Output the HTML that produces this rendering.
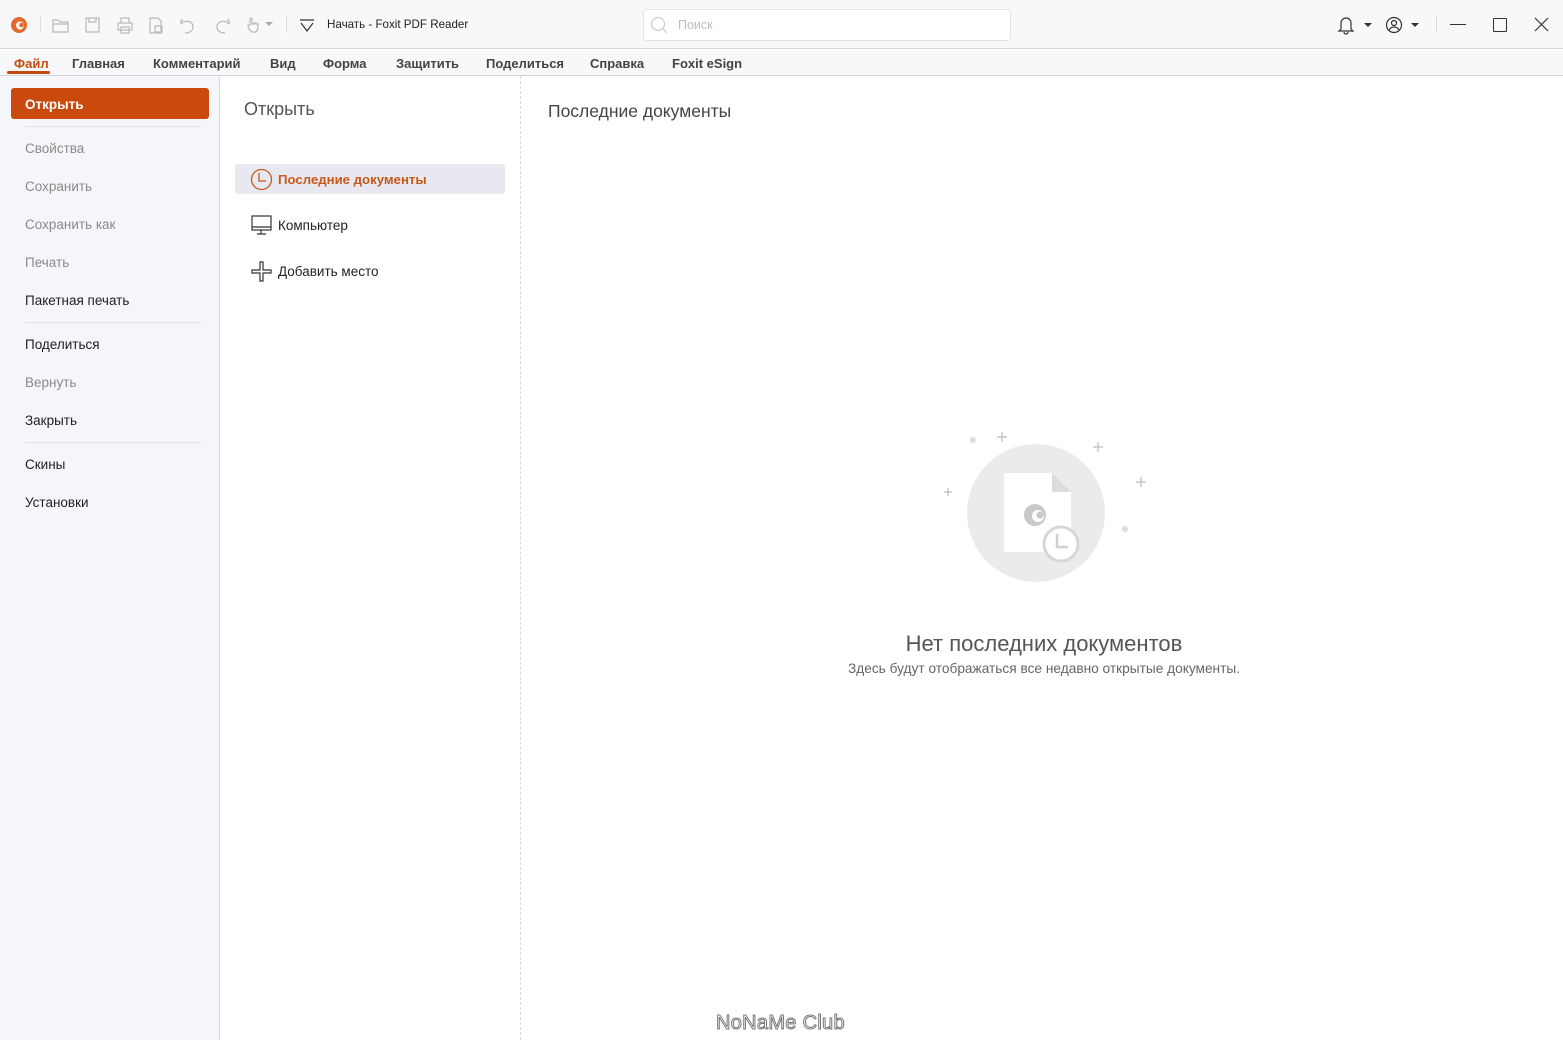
<!DOCTYPE html>
<html><head><meta charset="utf-8">
<style>
*{margin:0;padding:0;box-sizing:border-box}
body{width:1563px;height:1040px;overflow:hidden;background:#fff;font-family:"Liberation Sans","DejaVu Sans",sans-serif;color:#222;position:relative}
.abs{position:absolute}
#top{left:0;top:0;width:1563px;height:49px;background:#f8f8fb;border-bottom:1px solid #d4d4d8}
#tabs{left:0;top:50px;width:1563px;height:26px;background:#f8f8fb;border-bottom:1px solid #d4d4d8}
.tab{position:absolute;top:6px;font-size:13px;font-weight:bold;color:#444}
#side{left:0;top:76px;width:220px;height:964px;background:#f5f6fa;border-right:1px solid #dcdce0}
.mi{position:absolute;left:25px;font-size:13.5px;color:#222}
.dis{color:#8a8a8a}
.hr{position:absolute;left:25px;width:176px;height:1px;background:#e2e3e8}
#dash{left:520px;top:76px;width:0;height:964px;border-left:1px dashed #d8d8d8}
</style></head><body>
<div id="top" class="abs">
  <svg class="abs" style="left:10px;top:16px" width="18" height="18" viewBox="0 0 18 18"><circle cx="9" cy="9" r="8" fill="#e6692b"/><circle cx="10" cy="9.5" r="4" fill="#f8f8fb"/><circle cx="11.5" cy="9" r="2.3" fill="#e6692b"/></svg>
  <div class="abs" style="left:40px;top:16px;width:1px;height:17px;background:#ddd"></div>
  <svg class="abs" style="left:52px;top:16px" width="220" height="18" viewBox="0 0 220 18" fill="none" stroke="#b8b8b8" stroke-width="1.2">
    <path d="M1 4h5l2 2h8v10H1z M1 8h15"/>
    <rect x="34" y="2" width="13" height="14"/><path d="M37 2v4h7V2"/>
    <rect x="66" y="7" width="14" height="7"/><path d="M69 7V2h8v5 M69 11h8v6h-8z"/>
    <path d="M98 2h8l3 3v12H98z M103 10h7v6h-7z"/>
    <path d="M131 4h-2v4 M129 8 c3-4 12-4 12 3 c0 4-4 6-8 6"/>
    <path d="M175 4h2v4 M177 8 c-3-4-12-4-12 3 c0 4 4 6 8 6"/>
    <path d="M200 16c-3-2-4-5-4-7 l2 0 V3a1 1 0 0 1 2 0v5h2v-1h2v1h2v2c0 4-1 5-2 6z"/>
  </svg>
  <svg class="abs" style="left:265px;top:22px" width="8" height="5"><path d="M0 0h8l-4 4z" fill="#aaa"/></svg>
  <div class="abs" style="left:286px;top:16px;width:1px;height:17px;background:#ddd"></div>
  <svg class="abs" style="left:299px;top:17px" width="16" height="16" fill="none" stroke="#333" stroke-width="1.2"><path d="M1 3h14 M2 6l6 8 6-8"/></svg>
  <div class="abs" style="left:327px;top:18px;font-size:11.6px;color:#222">Начать - Foxit PDF Reader</div>
  <div class="abs" style="left:643px;top:9px;width:368px;height:32px;background:#fff;border:1px solid #e4e4e8;border-radius:3px"></div>
  <svg class="abs" style="left:650px;top:16px" width="18" height="18" fill="none" stroke="#ccc" stroke-width="1.2"><circle cx="8" cy="8" r="6.5"/><path d="M13 13l4 4"/></svg>
  <div class="abs" style="left:678px;top:18px;font-size:12.5px;color:#bbb">Поиск</div>
  <svg class="abs" style="left:1337px;top:15px" width="90" height="20" fill="none" stroke="#333" stroke-width="1.2">
    <path d="M4 14V8a5 5 0 0 1 10 0v6l2 2H2z M7 17a2 2 0 0 0 4 0"/>
    <path d="M27 8h8l-4 4z" fill="#333" stroke="none"/>
    <circle cx="57" cy="10" r="7.5"/><circle cx="57" cy="8" r="2.5"/><path d="M52 15c2-4 8-4 10 0"/>
    <path d="M74 8h8l-4 4z" fill="#333" stroke="none"/>
  </svg>
  <div class="abs" style="left:1436px;top:16px;width:1px;height:16px;background:#ddd"></div>
  <div class="abs" style="left:1450px;top:24px;width:16px;height:1px;background:#333"></div>
  <div class="abs" style="left:1493px;top:18px;width:14px;height:14px;border:1.3px solid #333;border-radius:1px"></div>
  <svg class="abs" style="left:1534px;top:17px" width="15" height="15" stroke="#333" stroke-width="1.2"><path d="M1 1l13 13 M14 1L1 14"/></svg>
</div>
<div id="tabs" class="abs">
  <div class="tab" style="left:14px;color:#c64a10">Файл</div>
  <div class="abs" style="left:7px;top:21px;width:43px;height:3px;background:#c64a10;border-radius:2px"></div>
  <div class="tab" style="left:72px">Главная</div>
  <div class="tab" style="left:153px">Комментарий</div>
  <div class="tab" style="left:270px">Вид</div>
  <div class="tab" style="left:323px">Форма</div>
  <div class="tab" style="left:396px">Защитить</div>
  <div class="tab" style="left:486px">Поделиться</div>
  <div class="tab" style="left:590px">Справка</div>
  <div class="tab" style="left:672px">Foxit eSign</div>
</div>
<div id="side" class="abs">
  <div class="abs" style="left:11px;top:12px;width:198px;height:31px;background:#c94a0c;border-radius:3px"></div>
  <div class="abs" style="left:25px;top:21px;font-size:13.5px;font-weight:bold;color:#fff">Открыть</div>
  <div class="hr" style="top:50px"></div>
  <div class="mi dis" style="top:65px">Свойства</div>
  <div class="mi dis" style="top:103px">Сохранить</div>
  <div class="mi dis" style="top:141px">Сохранить как</div>
  <div class="mi dis" style="top:179px">Печать</div>
  <div class="mi" style="top:217px">Пакетная печать</div>
  <div class="hr" style="top:246px"></div>
  <div class="mi" style="top:261px">Поделиться</div>
  <div class="mi dis" style="top:299px">Вернуть</div>
  <div class="mi" style="top:337px">Закрыть</div>
  <div class="hr" style="top:366px"></div>
  <div class="mi" style="top:381px">Скины</div>
  <div class="mi" style="top:419px">Установки</div>
</div>
<div class="abs" style="left:244px;top:99px;font-size:18px;color:#555">Открыть</div>
<div class="abs" style="left:235px;top:164px;width:270px;height:30px;background:#e8e9f0;border-radius:3px"></div>
<svg class="abs" style="left:250px;top:168px" width="24" height="24" fill="none" stroke="#c9581c" stroke-width="1.3"><circle cx="11.5" cy="11.5" r="10"/><path d="M9 5v8h7"/></svg>
<div class="abs" style="left:278px;top:172px;font-size:13.2px;font-weight:bold;color:#c9581c">Последние документы</div>
<svg class="abs" style="left:251px;top:215px" width="22" height="22" fill="none" stroke="#333" stroke-width="1.2"><rect x="1" y="1" width="19" height="14"/><path d="M1 12h19 M10 15v4 M6 19h9"/></svg>
<div class="abs" style="left:278px;top:218px;font-size:13.5px;color:#222">Компьютер</div>
<svg class="abs" style="left:251px;top:261px" width="22" height="22" fill="none" stroke="#333" stroke-width="1.2"><path d="M9 1h3v8h8v3h-8v8H9v-8H1V9h8z"/></svg>
<div class="abs" style="left:278px;top:264px;font-size:13.5px;color:#222">Добавить место</div>
<div id="dash" class="abs"></div>
<div class="abs" style="left:548px;top:101px;font-size:17.5px;color:#444">Последние документы</div>
<svg class="abs" style="left:930px;top:420px" width="230" height="180">
  <circle cx="106" cy="93" r="69" fill="#ebebeb"/>
  <path d="M74 53h48l19 19v60H74z" fill="#fff"/>
  <path d="M122 53l19 19h-19z" fill="#dcdcdc"/>
  <circle cx="105" cy="95" r="11" fill="#c8c8c8"/><circle cx="108" cy="96" r="6" fill="#fff"/><circle cx="110" cy="95" r="3.5" fill="#c8c8c8"/>
  <circle cx="131" cy="124" r="17" fill="#fff" stroke="#d6d6d6" stroke-width="3"/>
  <path d="M127 114v13h11" stroke="#d0d0d0" stroke-width="2.5" fill="none"/>
  <circle cx="43" cy="20" r="3" fill="#ddd"/><circle cx="195" cy="109" r="3" fill="#ddd"/>
  <path d="M72 12v10 M67 17h10 M168 22v10 M163 27h10 M18 68v8 M14 72h8 M211 57v10 M206 62h10" stroke="#bbb" stroke-width="1.2"/>
</svg>
<div class="abs" style="left:0;width:2088px;top:631px;text-align:center;font-size:22px;color:#555">Нет последних документов</div>
<div class="abs" style="left:0;width:2088px;top:661px;text-align:center;font-size:13.7px;color:#666">Здесь будут отображаться все недавно открытые документы.</div>
<svg class="abs" style="left:712px;top:1008px" width="140" height="28"><text x="4" y="21" font-family="Liberation Sans,sans-serif" font-size="20" fill="#fff" stroke="#777" stroke-width="1" letter-spacing="0.3">NoNaMe Club</text></svg>
</body></html>
